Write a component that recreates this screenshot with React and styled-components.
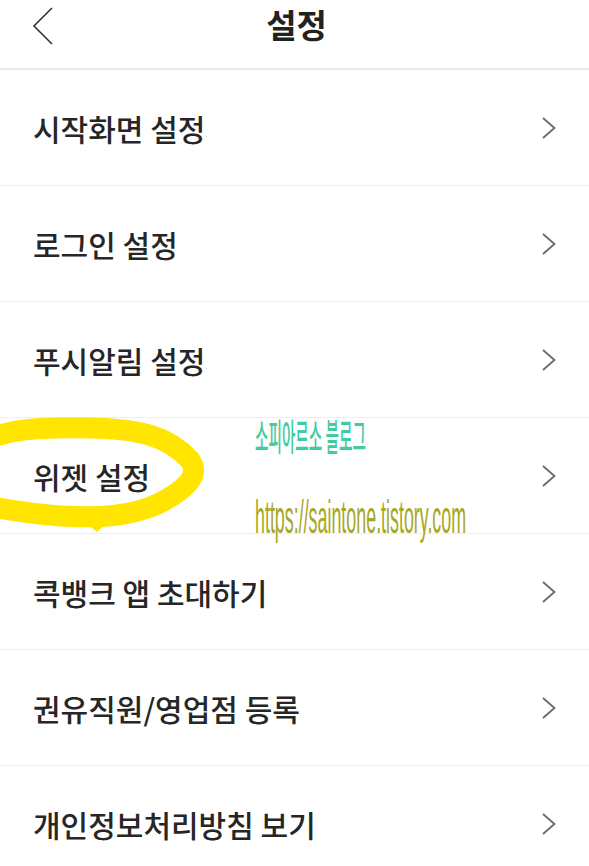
import React from "react";
import styled, { createGlobalStyle } from "styled-components";

const Global = createGlobalStyle`
  html, body { margin: 0; padding: 0; background: #fff; }
  body { font-family: "Noto Sans CJK KR", "Noto Sans", sans-serif; }
`;

const Page = styled.div`
  position: relative;
  width: 589px;
  height: 866px;
  overflow: hidden;
  background: #fff;
`;

const Header = styled.header`
  height: 68px;
  display: flex;
  align-items: flex-start;
  justify-content: center;
  position: relative;
  border-bottom: 2px solid #e9e9e9;
`;

const BackButton = styled.button`
  position: absolute;
  left: 31px;
  top: 5px;
  width: 24px;
  height: 42px;
  padding: 0;
  border: none;
  background: none;
  display: flex;
  align-items: center;
  justify-content: center;
`;

const Title = styled.h1`
  margin: 0;
  margin-left: 4px;
  font-size: 33px;
  line-height: 48px;
  font-weight: 700;
  color: #222;
  letter-spacing: 0;
`;

const List = styled.ul`
  list-style: none;
  margin: 0;
  padding: 0;
`;

const Row = styled.li`
  height: 115px;
  display: flex;
  align-items: center;
  justify-content: space-between;
  padding: 0 32px 0 33px;
  border-bottom: 1.5px solid #eeeeee;
  box-sizing: content-box;
`;

const Label = styled.span`
  font-size: 30px;
  font-weight: 500;
  color: #262626;
  letter-spacing: 0;
`;

const Overlay = styled.svg`
  position: absolute;
  left: 0;
  top: 0;
  pointer-events: none;
`;

const Watermark = styled.div`
  position: absolute;
  left: ${(p) => p.$x}px;
  top: ${(p) => p.$y}px;
  font-family: ${(p) => p.$font};
  font-size: ${(p) => p.$size}px;
  font-weight: ${(p) => p.$weight};
  color: ${(p) => p.$color};
  transform: scaleX(${(p) => p.$sx});
  transform-origin: left top;
  white-space: nowrap;
  line-height: 1;
  pointer-events: none;
`;

const Chevron = () => (
  <svg width="16" height="24" viewBox="0 0 16 24">
    <path d="M2 2 L13.5 12 L2 22" fill="none" stroke="#6a6a6a" strokeWidth="1.8" />
  </svg>
);

const items = [
  "시작화면 설정",
  "로그인 설정",
  "푸시알림 설정",
  "위젯 설정",
  "콕뱅크 앱 초대하기",
  "권유직원/영업점 등록",
  "개인정보처리방침 보기",
];

export default function App() {
  return (
    <>
      <Global />
      <Page>
        <Header>
          <BackButton aria-label="back">
            <svg width="24" height="40" viewBox="0 0 24 40">
              <path d="M21 2 L3 20 L21 38" fill="none" stroke="#333" strokeWidth="1.6" />
            </svg>
          </BackButton>
          <Title>설정</Title>
        </Header>
        <List>
          {items.map((t) => (
            <Row key={t}>
              <Label>{t}</Label>
              <Chevron />
            </Row>
          ))}
        </List>
        <Overlay width="589" height="866" viewBox="0 0 589 866">
          <path
            d="M-14 440 C 10 429, 40 427, 90 428 C 140 429, 168 436, 190 460 C 200 475, 188 488, 160 503 C 130 517, 100 518, 60 516 C 30 514, 8 510, -14 506"
            fill="none"
            stroke="#ffe500"
            strokeWidth="21"
            strokeLinecap="round"
            strokeLinejoin="round"
          />
          <path d="M80 518 L97 532 L114 516 Z" fill="#ffe500" />
        </Overlay>
        <Watermark
          $x={255}
          $y={417}
          $size={37}
          $weight={500}
          $color="#3fcca0"
          $sx={0.395}
          $font='"Noto Sans CJK KR", sans-serif'
        >
          소피아르소 블로그
        </Watermark>
        <Watermark
          $x={255}
          $y={493}
          $size={47}
          $weight={400}
          $color="#a7a726"
          $sx={0.38}
          $font='"Liberation Sans", sans-serif'
        >
          https://saintone.tistory.com
        </Watermark>
      </Page>
    </>
  );
}
